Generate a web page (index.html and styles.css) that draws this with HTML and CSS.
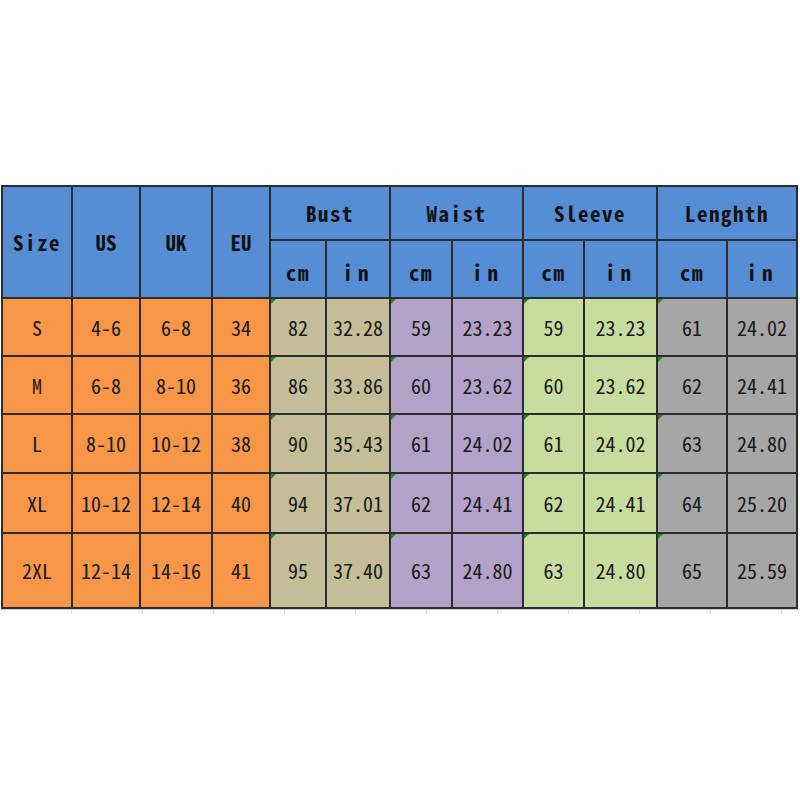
FILE: index.html
```html
<!DOCTYPE html>
<html>
<head>
<meta charset="utf-8">
<link rel="stylesheet" href="styles.css">
</head>
<body>
<div class="sheet">
<table class="chart">
<colgroup>
<col class="w70"><col class="w68"><col class="w72"><col class="w58">
<col class="w56"><col class="w64"><col class="w62"><col class="w71">
<col class="w61"><col class="w73"><col class="w70"><col class="w70">
</colgroup>
<thead>
<tr class="h1">
<th rowspan="2" class="sz">Size</th>
<th rowspan="2" class="cond">US</th>
<th rowspan="2" class="cond">UK</th>
<th rowspan="2" class="cond">EU</th>
<th colspan="2">Bust</th>
<th colspan="2">Waist</th>
<th colspan="2">Sleeve</th>
<th colspan="2">Lenghth</th>
</tr>
<tr class="h2">
<th>cm</th><th class="in">in</th>
<th>cm</th><th class="in">in</th>
<th>cm</th><th class="in">in</th>
<th>cm</th><th class="in">in</th>
</tr>
</thead>
<tbody>
<tr class="r1">
<td class="o lab">S</td><td class="o">4-6</td><td class="o">6-8</td><td class="o">34</td>
<td class="t flag">82</td><td class="t">32.28</td>
<td class="p flag">59</td><td class="p">23.23</td>
<td class="g flag">59</td><td class="g">23.23</td>
<td class="k flag">61</td><td class="k">24.02</td>
</tr>
<tr class="r2">
<td class="o lab">M</td><td class="o">6-8</td><td class="o">8-10</td><td class="o">36</td>
<td class="t flag">86</td><td class="t">33.86</td>
<td class="p flag">60</td><td class="p">23.62</td>
<td class="g flag">60</td><td class="g">23.62</td>
<td class="k flag">62</td><td class="k">24.41</td>
</tr>
<tr class="r3">
<td class="o lab">L</td><td class="o">8-10</td><td class="o">10-12</td><td class="o">38</td>
<td class="t flag">90</td><td class="t">35.43</td>
<td class="p flag">61</td><td class="p">24.02</td>
<td class="g flag">61</td><td class="g">24.02</td>
<td class="k flag">63</td><td class="k">24.80</td>
</tr>
<tr class="r4">
<td class="o lab">XL</td><td class="o">10-12</td><td class="o">12-14</td><td class="o">40</td>
<td class="t flag">94</td><td class="t">37.01</td>
<td class="p flag">62</td><td class="p">24.41</td>
<td class="g flag">62</td><td class="g">24.41</td>
<td class="k flag">64</td><td class="k">25.20</td>
</tr>
<tr class="r5">
<td class="o lab">2XL</td><td class="o">12-14</td><td class="o">14-16</td><td class="o">41</td>
<td class="t flag">95</td><td class="t">37.40</td>
<td class="p flag">63</td><td class="p">24.80</td>
<td class="g flag">63</td><td class="g">24.80</td>
<td class="k flag">65</td><td class="k">25.59</td>
</tr>
</tbody>
</table>
<div class="grid-below"></div>
</div>
</body>
</html>
```
FILE: styles.css
```css
html, body {
  margin: 0;
  padding: 0;
  background: #ffffff;
}
.sheet {
  padding: 185px 0 0 1px;
}
.chart {
  border-collapse: collapse;
  table-layout: fixed;
  width: 796px;
  font-family: "Noto Sans Mono CJK SC", "DejaVu Sans Mono", monospace;
  color: #1a1a1a;
}
.w70 { width: 70px; }
.w68 { width: 68px; }
.w72 { width: 72px; }
.w58 { width: 58px; }
.w56 { width: 56px; }
.w64 { width: 64px; }
.w62 { width: 62px; }
.w71 { width: 71px; }
.w61 { width: 61px; }
.w73 { width: 73px; }

.chart th, .chart td {
  border: 2px solid #2c2c2c;
  padding: 0;
  text-align: center;
  vertical-align: middle;
  white-space: nowrap;
  overflow: hidden;
}
.chart th {
  background: #558ed5;
  font-weight: bold;
  font-size: 21px;
  letter-spacing: 1.5px;
  color: #111;
}
.chart th.cond {
  letter-spacing: 0;
}
.chart th.in {
  letter-spacing: 5px;
}
.h1 { height: 54px; }
.h2 { height: 58px; }
.h2 th { padding-top: 6px; }
.r1, .r2 { height: 58px; }
.r3 { height: 59px; }
.r4 { height: 60px; }
.r5 { height: 75px; }

.chart td {
  font-size: 20px;
  position: relative;
}
.o { background: #f79646; }
.t { background: #c4bd97; }
.p { background: #b3a2c7; }
.g { background: #c9dc9f; }
.k { background: #a6a6a6; }

.flag::before {
  content: "";
  position: absolute;
  left: 0;
  top: 0;
  width: 0;
  height: 0;
  border-top: 5px solid #1d8a2a;
  border-right: 5px solid transparent;
}
.grid-below {
  width: 797px;
  height: 4px;
  border-top: 1px solid #d0d0d0;
  background: repeating-linear-gradient(90deg, transparent 0 70px, #dadada 70px 71px);
}
```
